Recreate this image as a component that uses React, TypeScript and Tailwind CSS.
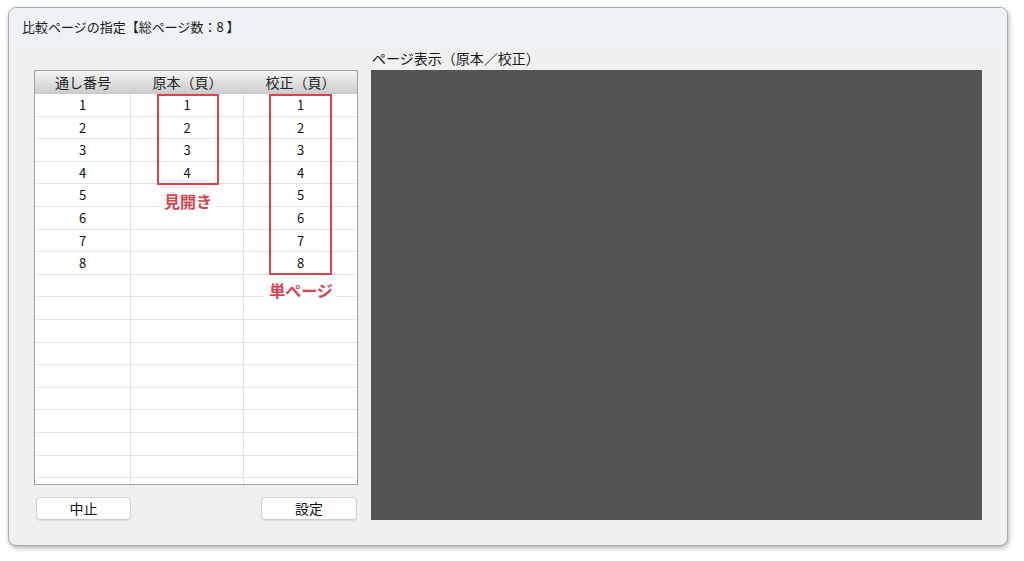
import React from 'react';

const rows = Array.from({ length: 18 }, (_, i) => i);
const font = { fontFamily: '"Noto Sans CJK JP", "Noto Sans", sans-serif' };

const App: React.FC = () => {
  return (
    <div className="w-[1024px] h-[561px] bg-white pl-[8px] pt-[7px]" style={font}>
      <div className="w-[1000px] h-[539px] rounded-[8px] border border-[#a9a9a9] bg-[#f0f0f0] shadow-[1px_2px_5px_rgba(0,0,0,0.3)] overflow-hidden flex flex-col">
        <div className="h-[37px] shrink-0 bg-[#eef2f6] flex items-center pl-[13px] text-[13px] text-[#1a1a1a]">
          比較ページの指定【総ページ数：8 】
        </div>
        <div className="flex pl-[25px] pt-[2px]">
          <div className="w-[324px] pt-[23px] flex flex-col">
            <div className="relative h-[415px] border border-[#a0a0a0] bg-white overflow-hidden">
              <div className="grid grid-cols-[96px_113px_1fr] h-[23px] bg-gradient-to-b from-[#f4f4f4] to-[#cdcdcd] text-[14px] text-[#222] border-b border-[#c8c8c8]">
                <div className="flex items-center justify-center">通し番号</div>
                <div className="flex items-center justify-center">原本（頁）</div>
                <div className="flex items-center justify-center">校正（頁）</div>
              </div>
              {rows.map((i) => (
                <div
                  key={i}
                  className="grid grid-cols-[96px_113px_1fr] h-[22.6px] border-b border-[#e2e2e2] text-[13px] text-[#111]"
                >
                  <div className="flex items-center justify-center border-r border-[#e2e2e2]">{i < 8 ? i + 1 : ''}</div>
                  <div className="flex items-center justify-center border-r border-[#e2e2e2]">{i < 4 ? i + 1 : ''}</div>
                  <div className="flex items-center justify-center">{i < 8 ? i + 1 : ''}</div>
                </div>
              ))}
              <div className="absolute left-[122px] top-[23px] w-[62px] h-[91px] border-2 border-[#d9434e]" />
              <div className="absolute left-[126px] top-[120px] w-[54px] bg-white text-center text-[16px] font-bold leading-[21px] text-[#d9434e]">
                見開き
              </div>
              <div className="absolute left-[234px] top-[23px] w-[63px] h-[181px] border-2 border-[#d9434e]" />
              <div className="absolute left-[230px] top-[209px] w-[72px] bg-white text-center text-[16px] font-bold leading-[21px] text-[#d9434e]">
                単ページ
              </div>
            </div>
            <div className="flex justify-between mt-[12px] pl-[2px] pr-[1px]">
              <button className="w-[95px] h-[23px] rounded-[4px] border border-[#cfcfcf] bg-[#fdfdfd] shadow-[0_1px_1px_rgba(0,0,0,0.08)] text-[14px] text-[#111] flex items-center justify-center">
                中止
              </button>
              <button className="w-[96px] h-[23px] rounded-[4px] border border-[#cfcfcf] bg-[#fdfdfd] shadow-[0_1px_1px_rgba(0,0,0,0.08)] text-[14px] text-[#111] flex items-center justify-center">
                設定
              </button>
            </div>
          </div>
          <div className="ml-[13px] w-[611px] flex flex-col">
            <div className="h-[23px] flex items-center pl-[1px] text-[14px] text-[#1a1a1a]">ページ表示（原本／校正）</div>
            <div className="h-[450px] bg-[#545454]" />
          </div>
        </div>
      </div>
    </div>
  );
};

export default App;
